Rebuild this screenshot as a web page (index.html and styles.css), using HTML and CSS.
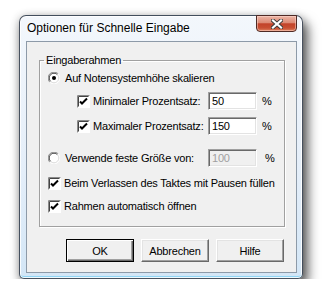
FILE: index.html
```html
<!DOCTYPE html>
<html lang="de">
<head>
  <meta charset="UTF-8" />
  <title>Optionen für Schnelle Eingabe</title>
  <link rel="stylesheet" href="styles.css">
</head>
<body>
  <div class="window">
    <div class="titlebar">
      <span class="title">Optionen für Schnelle Eingabe</span>
      <button class="close" aria-label="Schließen">
        <svg width="12" height="10" viewBox="0 0 12 10">
          <path d="M2 1.5 L10 8.5 M10 1.5 L2 8.5" stroke="#3c3c3c" stroke-width="4" stroke-linecap="square"/>
          <path d="M2 1.5 L10 8.5 M10 1.5 L2 8.5" stroke="#fff" stroke-width="2.2" stroke-linecap="square"/>
        </svg>
      </button>
    </div>

    <div class="client">
      <fieldset class="group">
        <legend>Eingaberahmen</legend>

        <div class="row r1">
          <svg class="radio" width="12" height="12" viewBox="0 0 12 12">
            <circle cx="6" cy="6" r="5.5" fill="#fff"/>
            <path d="M1.8 10.2 A5.5 5.5 0 0 1 10.2 1.8" fill="none" stroke="#8a8a8a" stroke-width="1"/>
            <path d="M2.6 9.4 A4.5 4.5 0 0 1 9.4 2.6" fill="none" stroke="#444" stroke-width="1"/>
            <path d="M10.2 1.8 A5.5 5.5 0 0 1 1.8 10.2" fill="none" stroke="#fff" stroke-width="1"/>
            <path d="M9.4 2.6 A4.5 4.5 0 0 1 2.6 9.4" fill="none" stroke="#dcdcdc" stroke-width="1"/>
            <circle cx="6" cy="6" r="2" fill="#000"/>
          </svg>
          <span>Auf Notensystemhöhe skalieren</span>
        </div>

        <div class="row sub r2">
          <svg class="check" width="13" height="13" viewBox="0 0 13 13">
            <rect x="0" y="0" width="13" height="13" fill="#fff"/>
            <path d="M0.5 12.5 V0.5 H12.5" fill="none" stroke="#8a8a8a"/>
            <path d="M1.5 11.5 V1.5 H11.5" fill="none" stroke="#444"/>
            <path d="M3 6.5 L5 8.5 L10 3.5" fill="none" stroke="#000" stroke-width="2"/>
          </svg>
          <span class="lbl-sub">Minimaler Prozentsatz:</span>
          <span class="edit">50</span>
          <span class="pct">%</span>
        </div>

        <div class="row sub r3">
          <svg class="check" width="13" height="13" viewBox="0 0 13 13">
            <rect x="0" y="0" width="13" height="13" fill="#fff"/>
            <path d="M0.5 12.5 V0.5 H12.5" fill="none" stroke="#8a8a8a"/>
            <path d="M1.5 11.5 V1.5 H11.5" fill="none" stroke="#444"/>
            <path d="M3 6.5 L5 8.5 L10 3.5" fill="none" stroke="#000" stroke-width="2"/>
          </svg>
          <span class="lbl-sub">Maximaler Prozentsatz:</span>
          <span class="edit">150</span>
          <span class="pct">%</span>
        </div>

        <div class="row r4">
          <svg class="radio" width="12" height="12" viewBox="0 0 12 12">
            <circle cx="6" cy="6" r="5.5" fill="#fff"/>
            <path d="M1.8 10.2 A5.5 5.5 0 0 1 10.2 1.8" fill="none" stroke="#8a8a8a" stroke-width="1"/>
            <path d="M2.6 9.4 A4.5 4.5 0 0 1 9.4 2.6" fill="none" stroke="#444" stroke-width="1"/>
            <path d="M10.2 1.8 A5.5 5.5 0 0 1 1.8 10.2" fill="none" stroke="#fff" stroke-width="1"/>
            <path d="M9.4 2.6 A4.5 4.5 0 0 1 2.6 9.4" fill="none" stroke="#dcdcdc" stroke-width="1"/>
          </svg>
          <span class="lbl-main">Verwende feste Größe von:</span>
          <span class="edit disabled">100</span>
          <span class="pct wide">%</span>
        </div>

        <div class="row r5">
          <svg class="check" width="13" height="13" viewBox="0 0 13 13">
            <rect x="0" y="0" width="13" height="13" fill="#fff"/>
            <path d="M0.5 12.5 V0.5 H12.5" fill="none" stroke="#8a8a8a"/>
            <path d="M1.5 11.5 V1.5 H11.5" fill="none" stroke="#444"/>
            <path d="M3 6.5 L5 8.5 L10 3.5" fill="none" stroke="#000" stroke-width="2"/>
          </svg>
          <span>Beim Verlassen des Taktes mit Pausen füllen</span>
        </div>

        <div class="row r6">
          <svg class="check" width="13" height="13" viewBox="0 0 13 13">
            <rect x="0" y="0" width="13" height="13" fill="#fff"/>
            <path d="M0.5 12.5 V0.5 H12.5" fill="none" stroke="#8a8a8a"/>
            <path d="M1.5 11.5 V1.5 H11.5" fill="none" stroke="#444"/>
            <path d="M3 6.5 L5 8.5 L10 3.5" fill="none" stroke="#000" stroke-width="2"/>
          </svg>
          <span>Rahmen automatisch öffnen</span>
        </div>
      </fieldset>

      <div class="buttons">
        <button class="btn default">OK</button>
        <button class="btn">Abbrechen</button>
        <button class="btn">Hilfe</button>
      </div>
    </div>
  </div>
</body>
</html>
```

FILE: styles.css
```css
* {
  box-sizing: border-box;
}

body {
  margin: 0;
  background: #fff;
  font-family: "Liberation Sans", Arial, sans-serif;
  font-size: 11px;
  color: #000;
}

.window {
  display: flex;
  flex-direction: column;
  width: 284px;
  height: 264px;
  margin: 15px 0 0 19px;
  padding: 0 5px 5px 6px;
  border: 1px solid rgba(30, 40, 55, 0.8);
  border-radius: 7px 7px 5px 5px;
  background: linear-gradient(#f3f7fc, #e4eef9 60%, #d3e6f6);
  box-shadow: 5px 7px 12px rgba(0, 0, 0, 0.6),
              0 2px 10px rgba(0, 0, 0, 0.3),
              inset 0 0 0 1px rgba(255, 255, 255, 0.85),
              inset 0 -2px 0 #8fd4f4;
}

.titlebar {
  display: flex;
  justify-content: space-between;
  height: 25px;
}

.title {
  padding: 5px 0 0 1px;
  font-size: 12px;
  text-shadow: 0 0 6px #fff;
}

.close {
  display: flex;
  align-items: center;
  justify-content: center;
  width: 41px;
  height: 17px;
  margin-top: -1px;
  padding: 0;
  border: 1px solid #4e2a25;
  border-radius: 0 0 4px 4px;
  background: linear-gradient(#edb6a6, #dc8a75 45%, #c2432a 52%, #c84f33 80%, #de8462);
  box-shadow: inset 0 0 0 1px rgba(255, 220, 210, 0.5);
}

.client {
  height: 232px;
  border: 1px solid #8d9aa8;
  background: #f0f0f0;
  letter-spacing: -0.2px;
}

.group {
  height: 173px;
  margin: 12px 11px 0 12px;
  padding: 0;
  border: 1px solid #a0a0a0;
  box-shadow: 1px 1px 0 #fff, inset 1px 1px 0 #fff;
}

.group legend {
  margin-left: 4px;
  padding: 0 2px;
  line-height: 13px;
}

.row {
  display: flex;
  align-items: center;
  height: 18px;
  padding-left: 8px;
}

.row.sub {
  padding-left: 37px;
}

.r1 { margin-top: 2px; }
.r2 { margin-top: 5px; }
.r3 { margin-top: 7px; }
.r4 { margin-top: 14px; }
.r5 { margin-top: 7px; }
.r6 { margin-top: 5px; }

.radio {
  margin-right: 5px;
}

.check {
  margin-right: 3px;
}

.lbl-sub {
  width: 115px;
}

.lbl-main {
  width: 143px;
}

.edit {
  width: 49px;
  height: 18px;
  padding: 2px 0 0 3px;
  border: 1px solid;
  border-color: #a0a0a0 #fff #fff #a0a0a0;
  background: #fff;
  box-shadow: inset 1px 1px 0 #696969, inset -1px -1px 0 #e3e3e3;
}

.edit.disabled {
  background: #f0f0f0;
  color: #a0a0a0;
}

.pct {
  margin-left: 5px;
}

.pct.wide {
  margin-left: 8px;
}

.buttons {
  display: flex;
  justify-content: flex-end;
  gap: 7px;
  margin-top: 12px;
  padding-right: 12px;
}

.btn {
  width: 68px;
  height: 23px;
  padding: 0;
  border: 1px solid;
  border-color: #fff #696969 #696969 #fff;
  background: #f0f0f0;
  box-shadow: inset -1px -1px 0 #a0a0a0, inset 1px 1px 0 #e3e3e3;
  font-family: "Liberation Sans", Arial, sans-serif;
  font-size: 11px;
  letter-spacing: -0.2px;
  color: #000;
}

.btn.default {
  border: 1px solid #000;
  box-shadow: inset 1px 1px 0 #fff, inset -1px -1px 0 #696969, inset -2px -2px 0 #a0a0a0;
}
```
